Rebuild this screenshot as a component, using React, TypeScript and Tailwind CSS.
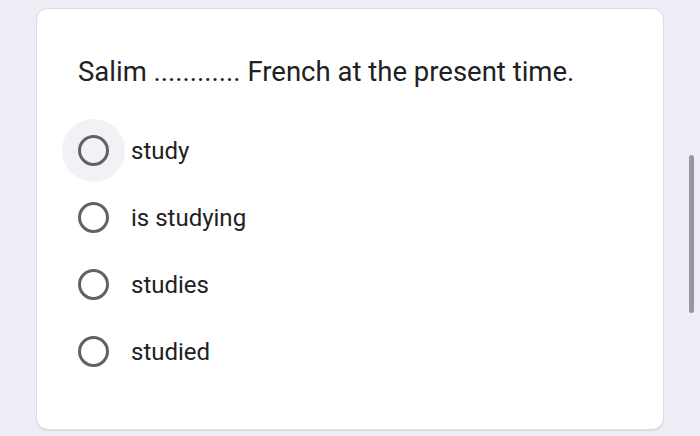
import React from "react";

const options = ["study", "is studying", "studies", "studied"];

function Radio() {
  return (
    <div className="w-[31px] h-[31px] rounded-full border-[3px] border-[#5f6368] box-border" />
  );
}

export default function App() {
  return (
    <div
      className="relative w-[700px] h-[436px] bg-[#efecf6] overflow-hidden"
      style={{ fontFamily: "Roboto, 'Liberation Sans', sans-serif" }}
    >
      <div className="absolute left-[36px] top-[8px] w-[628px] h-[422px] bg-white rounded-[12px] border border-[#dcdae2] shadow-[0_1px_1px_rgba(0,0,0,0.08)]">
        <div className="pl-[41px] pt-[45px]">
          <div className="text-[27.5px] leading-[36px] text-[#202124]">
            Salim ............ French at the present time.
          </div>
          <div className="mt-[27px] flex flex-col">
            {options.map((o, i) => (
              <div key={o} className="flex items-center h-[67px]">
                <div className="relative w-[31px] h-[31px] flex items-center justify-center">
                  {i === 0 && (
                    <div className="absolute left-[-16px] top-[-16px] w-[63px] h-[63px] rounded-full bg-[#f2f1f6]" />
                  )}
                  <div className="relative">
                    <Radio />
                  </div>
                </div>
                <span className="ml-[22px] text-[24px] text-[#202124]">{o}</span>
              </div>
            ))}
          </div>
        </div>
      </div>
      <div className="absolute left-[689px] top-[155px] w-[5px] h-[158px] rounded-full bg-[#98969f]" />
    </div>
  );
}
